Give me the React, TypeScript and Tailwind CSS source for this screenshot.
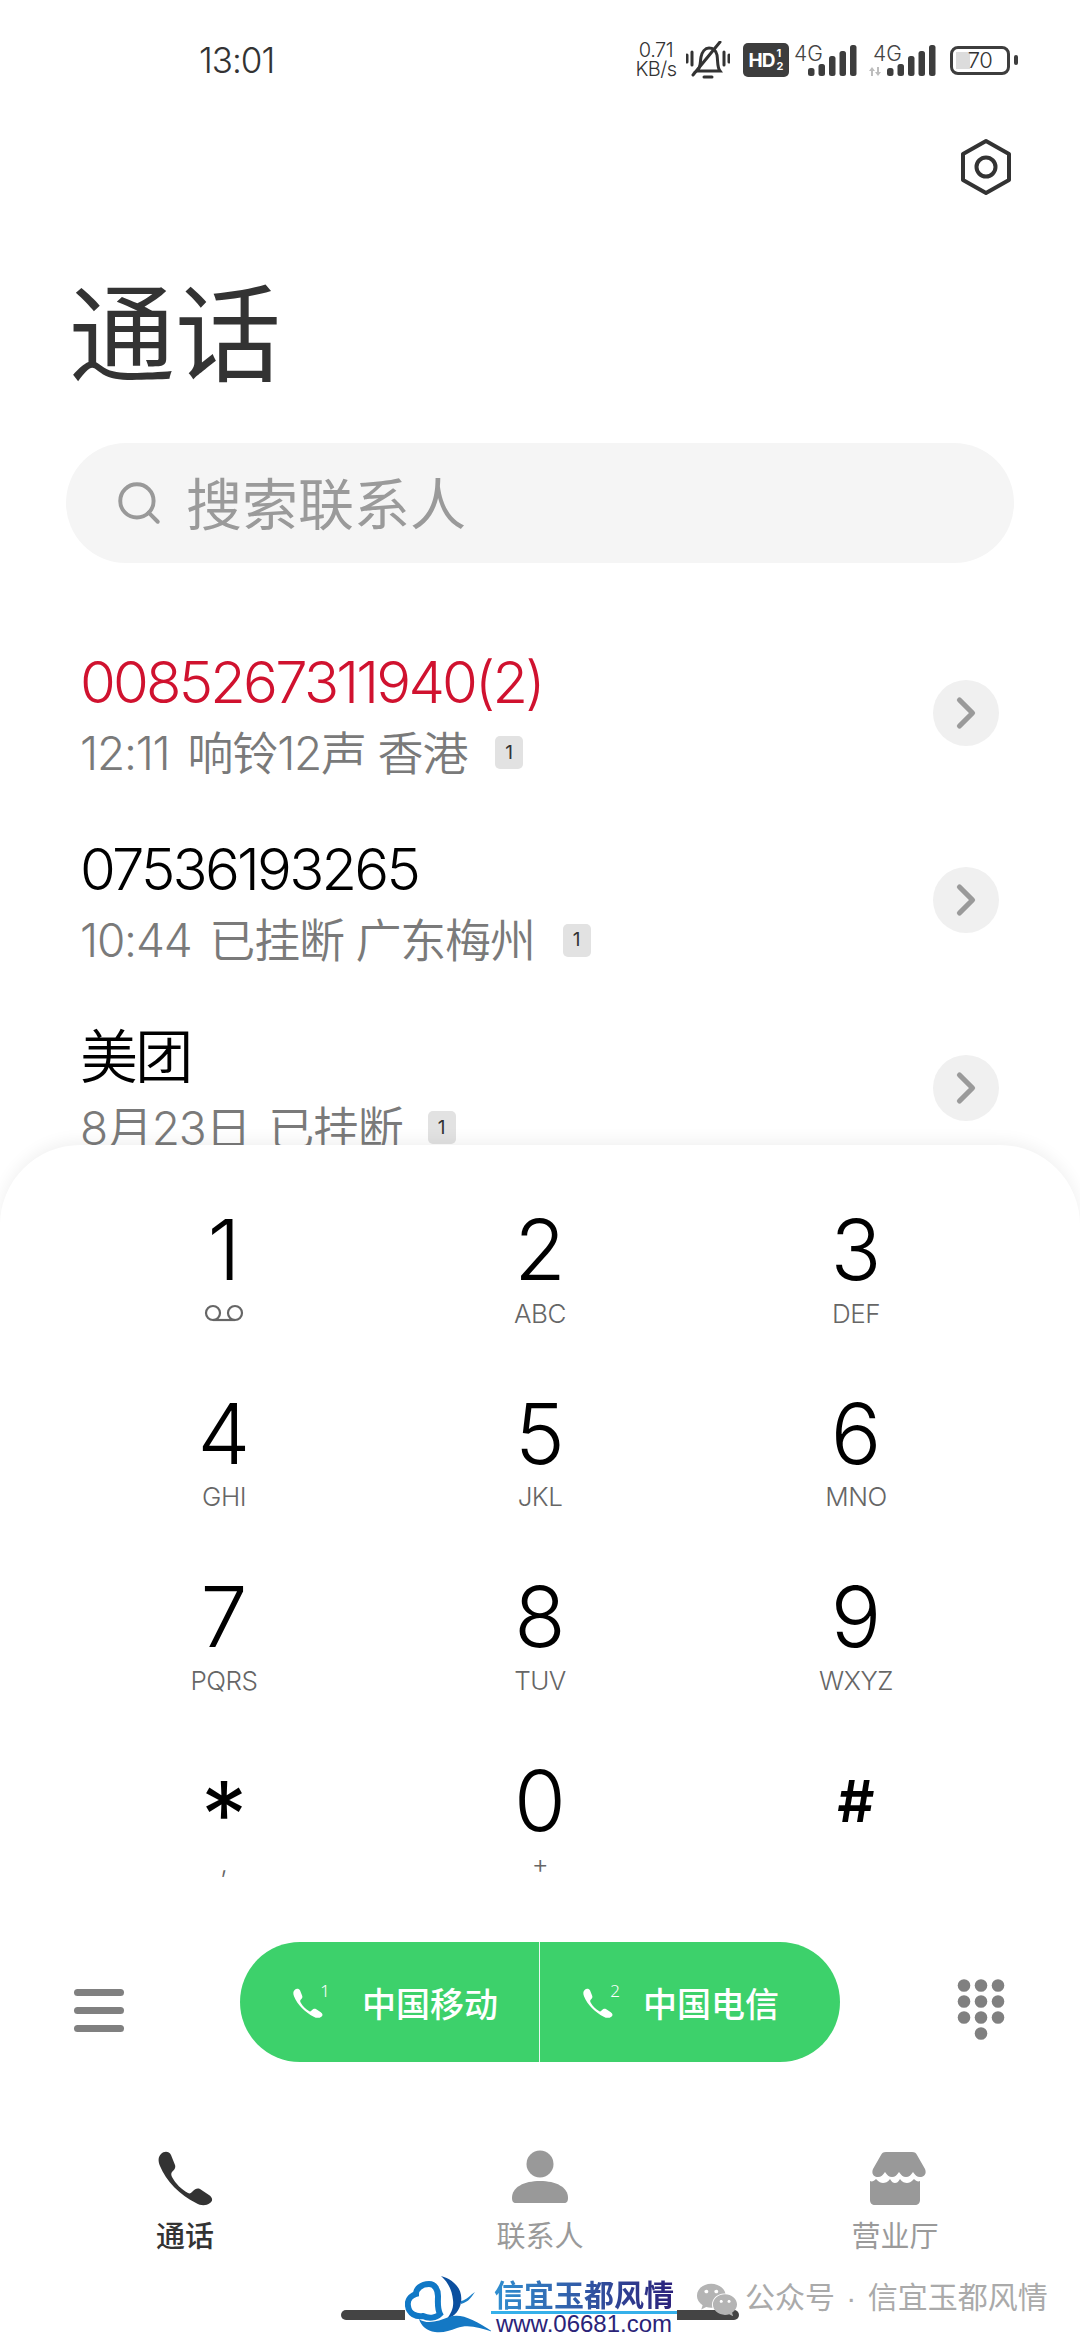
import { ChevronRight, Search } from "lucide-react";
import { FaWeixin } from "react-icons/fa";

const latin = "font-['Inter','Noto_Sans_CJK_SC',sans-serif]";

const calls = [
  { name: "0085267311940(2)", time: "12:11", info: "响铃12声 香港", missed: true, badgeGap: "ml-[28px]" },
  { name: "07536193265", time: "10:44", info: "已挂断 广东梅州", missed: false, badgeGap: "ml-[28px]" },
  { name: "美团", time: "8月23日", info: "已挂断", missed: false, badgeGap: "ml-[25px]" },
];

const keys = [
  { digit: "1", sub: "", cls: "text-[84px] leading-[94px] font-light" },
  { digit: "2", sub: "ABC", cls: "text-[84px] leading-[94px] font-light" },
  { digit: "3", sub: "DEF", cls: "text-[84px] leading-[94px] font-light" },
  { digit: "4", sub: "GHI", cls: "text-[84px] leading-[94px] font-light" },
  { digit: "5", sub: "JKL", cls: "text-[84px] leading-[94px] font-light" },
  { digit: "6", sub: "MNO", cls: "text-[84px] leading-[94px] font-light" },
  { digit: "7", sub: "PQRS", cls: "text-[84px] leading-[94px] font-light" },
  { digit: "8", sub: "TUV", cls: "text-[84px] leading-[94px] font-light" },
  { digit: "9", sub: "WXYZ", cls: "text-[84px] leading-[94px] font-light" },
  { digit: "*", sub: ",", cls: "text-[92px] leading-[66px] font-normal pt-[28px]" },
  { digit: "0", sub: "+", cls: "text-[84px] leading-[94px] font-light" },
  { digit: "#", sub: "", cls: "text-[58px] leading-[94px] font-semibold" },
];

const bars = [
  { x: 14, y: 24, h: 8 },
  { x: 24.5, y: 20, h: 12 },
  { x: 35, y: 12, h: 20 },
  { x: 45.5, y: 7, h: 25 },
  { x: 56, y: 1, h: 31 },
];

function Signal({ data }: { data?: boolean }) {
  return (
    <div className="relative w-[62px] h-[32px]">
      <span className="absolute left-0 top-[-1px] text-[21px] leading-none font-light text-[#444]">4G</span>
      <svg className="absolute left-0 top-0 overflow-visible" width="62" height="32" viewBox="0 0 62 32">
        {data && <path d="M-4 27l3-4 3 4h-2v5h-2v-5zM4 23h2v5h2l-3 4-3-4h2z" fill="#bdbdbd" />}
        {bars.map((b) => (
          <rect key={b.x} x={b.x} y={b.y} width="6.5" height={b.h} rx="2.5" fill="#3d3d3d" />
        ))}
      </svg>
    </div>
  );
}

function StatusBar() {
  return (
    <div className={`flex items-center justify-between h-[100px] pt-[20px] pl-[199px] pr-[62px] ${latin} text-[#333]`}>
      <span className="text-[35px] font-light tracking-[-1px]">13:01</span>
      <div className="flex items-center">
        <div className="flex flex-col items-center text-[20px] leading-[19px] font-light w-[38px] tracking-[-0.5px]">
          <span>0.71</span>
          <span>KB/s</span>
        </div>
        <svg className="ml-[11px]" width="44" height="38" viewBox="0 0 44 38" fill="none" stroke="#333" strokeWidth="3" strokeLinecap="round">
          <path d="M11 30c4-3 3-9 4-14 1-5 4-9 8-9s7 3 8 7c1 6 0 12 3 16z" />
          <path d="M18 36h8" />
          <path d="M7 34L34 1" />
          <path d="M1 14v7M6 11v13M38 11v13M43 14v7" />
        </svg>
        <div className="ml-[13px] flex items-center justify-center w-[46px] h-[34px] rounded-[5px] bg-[#3d3d3d] text-white font-bold">
          <span className="text-[19px] leading-none tracking-[-1px]">HD</span>
          <span className="flex flex-col text-[11px] leading-[13px] ml-[2px]">
            <span>1</span>
            <span>2</span>
          </span>
        </div>
        <div className="ml-[5px]">
          <Signal />
        </div>
        <div className="ml-[17px]">
          <Signal data />
        </div>
        <div className="ml-[15px] relative w-[60px] h-[29px] rounded-[8px] border-[3px] border-[#3d3d3d] flex items-center justify-center">
          <span className="absolute left-[3px] top-[3px] bottom-[3px] w-[14px] bg-[#dcdcdc]"></span>
          <span className="relative text-[22px] leading-none font-light tracking-[-0.5px]">70</span>
        </div>
        <span className="ml-[4px] w-[4px] h-[10px] rounded-[2px] bg-[#3d3d3d]"></span>
      </div>
    </div>
  );
}

function SettingsHex() {
  return (
    <svg width="54" height="58" viewBox="0 0 54 58" fill="none" stroke="#333" strokeWidth="4" strokeLinejoin="round">
      <path d="M27 3l23 13v26L27 55 4 42V16z" />
      <circle cx="27" cy="29" r="9.5" />
    </svg>
  );
}

function CallRow({ call }: { call: (typeof calls)[number] }) {
  return (
    <div className="flex items-center justify-between h-[187.5px] pl-[80px] pr-[81px] shrink-0">
      <div className={`${latin} mt-[6px]`}>
        <div className={`text-[58px] leading-[66px] font-[350] tracking-[-2.8px] ${call.missed ? "text-[#d0122f]" : "text-black"}`}>
          {call.name}
        </div>
        <div className="flex items-center mt-[8px] text-[46px] leading-[60px] font-[350] tracking-[-1.2px] text-[#7a7a7a]">
          <span>{call.time}</span>
          <span className="ml-[18px]">{call.info}</span>
          <span className={`${call.badgeGap} flex items-center justify-center w-[28px] h-[33px] rounded-[5px] bg-[#e2e2e2] text-[19px] text-[#333] font-normal tracking-normal`}>
            1
          </span>
        </div>
      </div>
      <div className="flex items-center justify-center w-[66px] h-[66px] rounded-full bg-[#f0f0f0]">
        <ChevronRight size={52} strokeWidth={2.4} className="text-[#9a9a9a]" />
      </div>
    </div>
  );
}

function Voicemail() {
  return (
    <svg width="40" height="18" viewBox="0 0 40 18" fill="none" stroke="#666" strokeWidth="2.2">
      <circle cx="9" cy="9" r="7" />
      <circle cx="31" cy="9" r="7" />
      <path d="M9 16h22" />
    </svg>
  );
}

function Keypad() {
  return (
    <div className={`grid grid-cols-3 px-[66px] pt-[58px] ${latin}`}>
      {keys.map((k) => (
        <div key={k.digit} className="flex flex-col items-center h-[183.5px]">
          <span className={`${k.cls} text-black h-[94px]`}>{k.digit}</span>
          <div className="flex items-center justify-center h-[30px] mt-[1px] text-[26px] font-light tracking-[-0.5px] text-[#666]">
            {k.digit === "1" ? <Voicemail /> : k.sub}
          </div>
        </div>
      ))}
    </div>
  );
}

function PhoneGlyph({ className }: { className?: string }) {
  return (
    <svg className={className} viewBox="0 0 55 54" fill="currentColor">
      <path d="M3 3C6 0 11 0 13 4l4 10c1 3-1 5-3 7-1 1-1 3 0 5 4 7 9 12 16 16 2 1 3 0 5-2 2-2 4-3 7-2l9 6c4 3 4 6 1 8-4 3-9 3-14 0C22 44 8 30 2 15 0 10 0 6 3 3z" />
    </svg>
  );
}

function CallButton({ sim, label, pad, gap }: { sim: string; label: string; pad: string; gap: string }) {
  return (
    <div className={`w-[300px] shrink-0 flex items-center ${pad}`}>
      <div className="relative w-[34px] h-[36px] shrink-0">
        <PhoneGlyph className="w-[30px] h-[34px] mt-[2px] text-white" />
        <span className="absolute right-[-3px] top-[-2px] text-[17px] leading-none text-white font-light">{sim}</span>
      </div>
      <span className={`${gap} text-[34px] font-medium text-white font-['Noto_Sans_CJK_SC',sans-serif] whitespace-nowrap`}>{label}</span>
    </div>
  );
}

function ActionBar() {
  return (
    <div className="flex items-center justify-between px-[74px] mt-[5px]">
      <div className="flex flex-col gap-[11px] w-[50px] mt-[16px]">
        <span className="h-[7px] rounded-full bg-[#808080]"></span>
        <span className="h-[7px] rounded-full bg-[#808080]"></span>
        <span className="h-[7px] rounded-full bg-[#808080]"></span>
      </div>
      <div className="flex w-[600px] h-[120px] rounded-full bg-[#3dd16b] divide-x divide-[#e8f8ee]">
        <CallButton sim="1" label="中国移动" pad="pl-[53px]" gap="ml-[35px]" />
        <CallButton sim="2" label="中国电信" pad="pl-[43px]" gap="ml-[26px]" />
      </div>
      <svg className="mt-[16px]" width="50" height="62" viewBox="0 0 50 62" fill="#808080">
        {[0, 1, 2].map((r) =>
          [0, 1, 2].map((c) => <circle key={`${r}${c}`} cx={8 + c * 17} cy={6.5 + r * 16} r="6.3" />)
        )}
        <circle cx="25" cy="54.5" r="6.3" />
      </svg>
    </div>
  );
}

function NavBar() {
  return (
    <div className="grid grid-cols-3 mt-[88px] px-[7.5px] font-['Noto_Sans_CJK_SC',sans-serif]">
      <div className="flex flex-col items-center">
        <PhoneGlyph className="w-[55px] h-[56px] text-[#333]" />
        <span className="mt-[10px] text-[29px] leading-[36px] font-medium text-[#333]">通话</span>
      </div>
      <div className="flex flex-col items-center">
        <svg width="58" height="56" viewBox="0 0 58 56" fill="#999">
          <circle cx="29" cy="14" r="13.5" />
          <path d="M1 48c0-11 12-17 28-17s28 6 28 17c0 3-1 5-4 5H5c-3 0-4-2-4-5z" />
        </svg>
        <span className="mt-[10px] text-[29px] leading-[36px] text-[#9a9a9a]">联系人</span>
      </div>
      <div className="flex flex-col items-center">
        <svg width="62" height="56" viewBox="0 0 62 56" fill="#999">
          <path d="M14 2h34c3 0 4 1 5 3l8 14c2 5-1 8-5 8-3 0-5-2-7-5-2 3-4 5-7 5s-5-2-7-5c-2 3-4 5-7 5s-5-2-7-5c-2 3-4 5-7 5-4 0-7-3-5-8l8-14c1-2 2-3 5-3z" />
          <path d="M6 31c2 1 4 0 6-2 3 3 5 4 7 4s5-1 7-4c2 3 3 4 5 4s3-1 5-4c2 3 5 4 7 4s4-1 7-4c2 2 4 3 6 2v19c0 3-2 5-5 5H11c-3 0-5-2-5-5z" />
        </svg>
        <span className="mt-[10px] text-[29px] leading-[36px] text-[#9a9a9a]">营业厅</span>
      </div>
    </div>
  );
}

function Watermark() {
  return (
    <div className="absolute left-0 right-0 top-[2270px] h-[70px] pointer-events-none">
      <div className="absolute left-[405px] top-[5px] w-[272px] h-[58px] bg-white">
        <svg width="92" height="58" viewBox="0 0 92 58" fill="none">
          <path d="M36 1c14 4 22 14 20 26-1 8-6 14-14 17 4-6 7-11 6-19-1-10-5-18-12-24z" fill="#0b4f9f" />
          <path d="M24 9c-8 0-13 5-13 10C5 21 2 26 3 31c1 8 8 11 15 10 6 3 13 2 17-2-3-6-2-12-2-18 0-6-3-12-9-12z" stroke="#1078c6" strokeWidth="6" fill="#fff" />
          <path d="M56 26c6-1 9-6 14-9-3 4-6 10-14 12z" fill="#1b7fc8" />
          <path d="M14 44c8 6 20 2 30-2 12-4 24 2 44 15-14-5-26-8-36-4-8 3-14 5-22 4-8-1-14-6-16-13z" fill="#1478c4" />
        </svg>
      </div>
      <div className="absolute left-[491px] top-[5px] w-[186px] flex flex-col items-center bg-white">
        <span className="text-[30px] leading-[36px] font-bold bg-gradient-to-r from-[#2f8fd0] to-[#2a1f7a] bg-clip-text text-transparent font-['Noto_Sans_CJK_SC',serif]">信宜玉都风情</span>
        <span className="w-full h-[3px] bg-[#35b0ea]"></span>
        <span className="text-[24px] leading-[19px] font-['Liberation_Sans',sans-serif] text-[#2a2378] whitespace-nowrap">www.06681.com</span>
      </div>
      <FaWeixin className="absolute left-[696px] top-[9px] text-[#b4b4b4]" size={42} />
      <span className="absolute left-[745px] top-[8px] text-[30px] leading-[40px] text-[#aaaaaa] whitespace-nowrap font-['Liberation_Sans','Noto_Sans_CJK_SC',sans-serif]">
        公众号 <span className="mx-[3px]">·</span> 信宜玉都风情
      </span>
    </div>
  );
}

export default function App() {
  return (
    <div className="relative w-[1080px] h-[2340px] overflow-hidden bg-white flex flex-col">
      <StatusBar />
      <div className="flex justify-end pr-[67px] mt-[38px]">
        <SettingsHex />
      </div>
      <h1 className="ml-[69px] mt-[69px] text-[106px] leading-[124px] font-normal text-[#333] font-['Noto_Sans_CJK_SC',sans-serif]">通话</h1>
      <div className="flex items-center mx-[66px] mt-[54px] h-[120px] shrink-0 rounded-full bg-[#f5f5f5] pl-[48px]">
        <Search size={50} strokeWidth={1.9} className="text-[#999]" />
        <span className="ml-[22px] mb-[4px] text-[56px] font-normal text-[#9a9a9a] font-['Noto_Sans_CJK_SC',sans-serif]">搜索联系人</span>
      </div>
      <div className="h-[582px] shrink-0 pt-[56px] overflow-hidden flex flex-col">
        {calls.map((c) => (
          <CallRow key={c.name} call={c} />
        ))}
      </div>
      <div className="flex-1 rounded-t-[80px] bg-white shadow-[0_-4px_16px_rgba(0,0,0,0.06)] relative">
        <Keypad />
        <ActionBar />
        <NavBar />
      </div>
      <div className="absolute left-[341px] bottom-[20px] w-[398px] h-[10px] rounded-full bg-[#444]"></div>
      <Watermark />
    </div>
  );
}
